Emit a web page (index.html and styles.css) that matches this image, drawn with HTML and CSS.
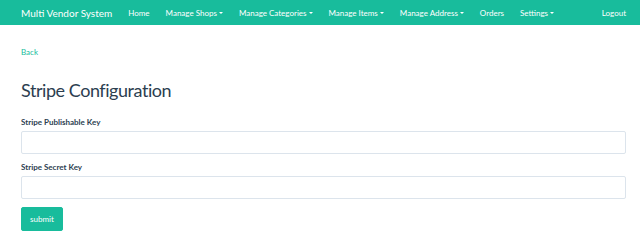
FILE: index.html
```html
<!DOCTYPE html>
<html>
<head>
<meta charset="utf-8">
<link rel="stylesheet" href="styles.css">
</head>
<body>
<nav class="navbar">
  <a class="brand" href="#">Multi Vendor System</a>
  <ul class="nav">
    <li><a href="#">Home</a></li>
    <li><a href="#">Manage Shops<span class="caret"></span></a></li>
    <li><a href="#">Manage Categories<span class="caret"></span></a></li>
    <li><a href="#">Manage Items<span class="caret"></span></a></li>
    <li><a href="#">Manage Address<span class="caret"></span></a></li>
    <li><a href="#">Orders</a></li>
    <li><a href="#">Settings<span class="caret"></span></a></li>
  </ul>
  <ul class="nav nav-right">
    <li><a href="#">Logout</a></li>
  </ul>
</nav>
<main class="container">
  <a class="back" href="#">Back</a>
  <h1 class="title">Stripe Configuration</h1>
  <form class="form">
    <div class="group">
      <label class="label">Stripe Publishable Key</label>
      <input class="input" type="text">
    </div>
    <div class="group">
      <label class="label">Stripe Secret Key</label>
      <input class="input" type="text">
    </div>
    <button class="btn" type="button">submit</button>
  </form>
</main>
</body>
</html>
```
FILE: styles.css
```css
* { box-sizing: border-box; }
body {
  margin: 0;
  font-family: Lato, "Open Sans", sans-serif;
  color: #2c3e50;
  background: #fff;
}
a { text-decoration: none; }
.navbar {
  height: 25px;
  background: #18bc9c;
  display: flex;
  align-items: center;
  padding: 0 14px 0 21px;
}
.brand {
  color: #fff;
  font-size: 10px;
  margin-right: 8px;
}
.nav {
  list-style: none;
  margin: 0;
  padding: 0;
  display: flex;
}
.nav li a {
  display: block;
  color: #fff;
  font-size: 8px;
  padding: 0 8px;
}
.nav-right { margin-left: auto; }
.nav-right li a { padding-right: 0; }
.caret {
  display: inline-block;
  width: 0;
  height: 0;
  margin-left: 2px;
  vertical-align: middle;
  border-top: 2px solid #fff;
  border-left: 2px solid transparent;
  border-right: 2px solid transparent;
}
.container {
  padding: 0 14px 0 21px;
}
.back {
  display: block;
  margin-top: 22px;
  font-size: 8px;
  color: #18bc9c;
}
.title {
  margin: 24px 0 0;
  font-size: 18px;
  letter-spacing: -0.45px;
  font-weight: 400;
  line-height: 1.1;
}
.form { margin-top: 16px; }
.group {
  display: flex;
  flex-direction: column;
  margin-bottom: 8px;
}
.label {
  font-size: 8px;
  font-weight: 700;
  margin-bottom: 4px;
}
.input {
  height: 23px;
  border: 1px solid #dce4ec;
  border-radius: 2px;
  background: #fff;
}
.btn {
  display: block;
  height: 24px;
  width: 42px;
  padding: 0;
  background: #18bc9c;
  color: #fff;
  border: 1px solid #18bc9c;
  border-radius: 2px;
  font-family: Lato, sans-serif;
  font-size: 8px;
}
```
